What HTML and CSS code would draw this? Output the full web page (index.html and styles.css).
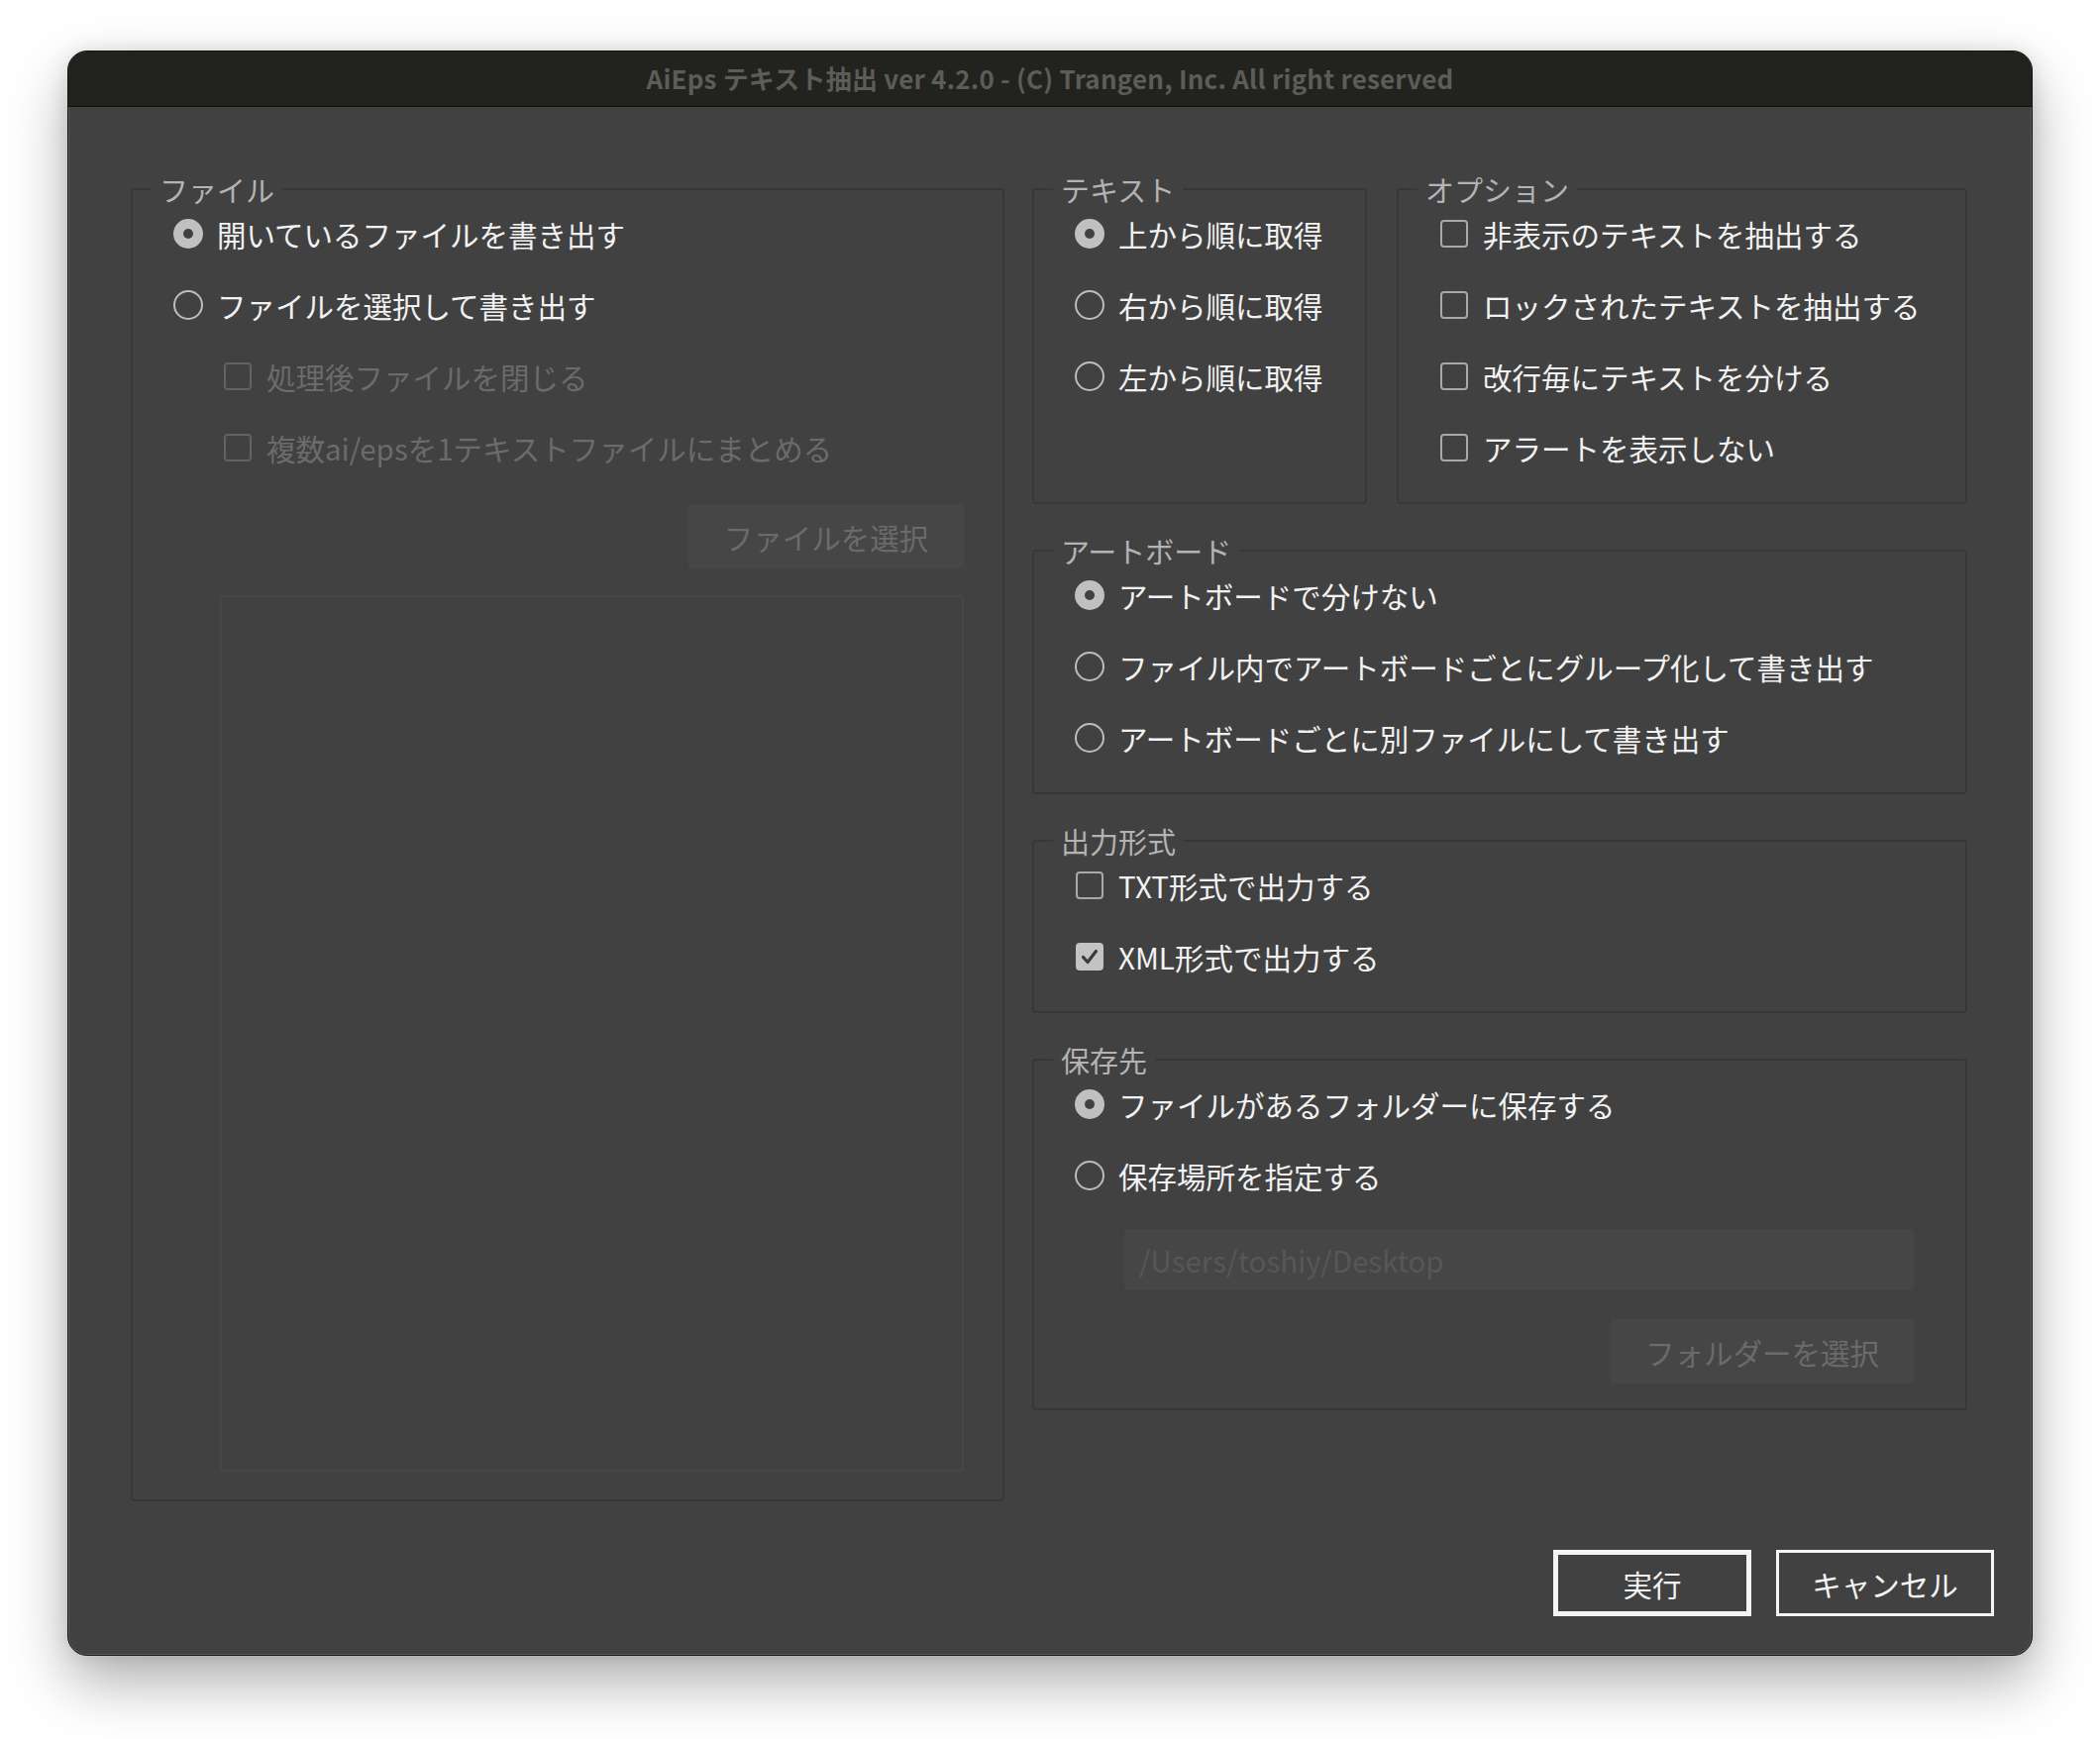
FILE: index.html
```html
<!DOCTYPE html>
<html lang="ja">
<head>
<meta charset="utf-8">
<title>AiEps テキスト抽出</title>
<link rel="stylesheet" href="styles.css">
</head>
<body>
<div class="window">
  <div class="titlebar">AiEps テキスト抽出 ver 4.2.0 - (C) Trangen, Inc. All right reserved</div>
  <div class="body">
    <div class="columns">
      <fieldset class="group file-group">
        <legend>ファイル</legend>
        <div class="rows">
          <div class="row"><span class="radio on"></span><span class="label">開いているファイルを書き出す</span></div>
          <div class="row"><span class="radio"></span><span class="label">ファイルを選択して書き出す</span></div>
          <div class="row sub disabled"><span class="check"></span><span class="label">処理後ファイルを閉じる</span></div>
          <div class="row sub disabled"><span class="check"></span><span class="label">複数ai/epsを1テキストファイルにまとめる</span></div>
        </div>
        <div class="btn-line"><div class="flat-btn file-btn">ファイルを選択</div></div>
        <div class="file-list"></div>
      </fieldset>
      <div class="right">
        <div class="top-row">
          <fieldset class="group text-group">
            <legend>テキスト</legend>
            <div class="rows">
              <div class="row"><span class="radio on"></span><span class="label">上から順に取得</span></div>
              <div class="row"><span class="radio"></span><span class="label">右から順に取得</span></div>
              <div class="row"><span class="radio"></span><span class="label">左から順に取得</span></div>
            </div>
          </fieldset>
          <fieldset class="group opt-group">
            <legend>オプション</legend>
            <div class="rows">
              <div class="row"><span class="check"></span><span class="label">非表示のテキストを抽出する</span></div>
              <div class="row"><span class="check"></span><span class="label">ロックされたテキストを抽出する</span></div>
              <div class="row"><span class="check"></span><span class="label">改行毎にテキストを分ける</span></div>
              <div class="row"><span class="check"></span><span class="label">アラートを表示しない</span></div>
            </div>
          </fieldset>
        </div>
        <fieldset class="group">
          <legend>アートボード</legend>
          <div class="rows">
            <div class="row"><span class="radio on"></span><span class="label">アートボードで分けない</span></div>
            <div class="row"><span class="radio"></span><span class="label">ファイル内でアートボードごとにグループ化して書き出す</span></div>
            <div class="row"><span class="radio"></span><span class="label">アートボードごとに別ファイルにして書き出す</span></div>
          </div>
        </fieldset>
        <fieldset class="group out-group">
          <legend>出力形式</legend>
          <div class="rows">
            <div class="row"><span class="check"></span><span class="label">TXT形式で出力する</span></div>
            <div class="row"><span class="check on"><svg viewBox="0 0 28 28" width="28" height="28"><path d="M7.5 14.5 L12 19.5 L20.5 8.5" fill="none" stroke="#3b3b3b" stroke-width="3.2" stroke-linecap="round" stroke-linejoin="round"/></svg></span><span class="label">XML形式で出力する</span></div>
          </div>
        </fieldset>
        <fieldset class="group save-group">
          <legend>保存先</legend>
          <div class="rows">
            <div class="row"><span class="radio on"></span><span class="label">ファイルがあるフォルダーに保存する</span></div>
            <div class="row"><span class="radio"></span><span class="label">保存場所を指定する</span></div>
          </div>
          <div class="path-input">/Users/toshiy/Desktop</div>
          <div class="btn-line"><div class="flat-btn folder-btn">フォルダーを選択</div></div>
        </fieldset>
      </div>
    </div>
    <div class="actions">
      <div class="btn default">実行</div>
      <div class="btn">キャンセル</div>
    </div>
  </div>
</div>
</body>
</html>
```

FILE: styles.css
```css
html, body {
  margin: 0;
  padding: 0;
  background: #ffffff;
}
body {
  width: 2120px;
  height: 1756px;
  overflow: hidden;
  font-family: "Noto Sans CJK JP", "Noto Sans", sans-serif;
}
.window {
  box-sizing: border-box;
  margin: 51px 0 0 68px;
  width: 1984px;
  height: 1621px;
  background: #414141;
  border: 1px solid #161616;
  border-radius: 20px;
  overflow: hidden;
  box-shadow: 0 26px 60px rgba(0,0,0,0.32), 0 0 18px rgba(0,0,0,0.10), inset 0 0 0 1px #595959;
  display: flex;
  flex-direction: column;
}
.titlebar {
  height: 55px;
  flex: none;
  background: #22221f;
  border-bottom: 1px solid #0f0f0e;
  color: #5c5c58;
  font-weight: 700;
  font-size: 26px;
  line-height: 53px;
  text-align: center;
  letter-spacing: 0.2px;
}
.body {
  flex: 1;
  padding: 66px 38px 0 63px;
  display: flex;
  flex-direction: column;
}
.columns {
  display: flex;
  gap: 28px;
  margin-right: 27px;
}
.group {
  margin: 0;
  border: 2px solid #373737;
  border-radius: 4px;
  padding: 0 20px 27px 41px;
  min-width: 0;
}
.group legend {
  font-size: 29px;
  line-height: 34px;
  color: #b3b3b3;
  padding: 0 8px;
  margin-left: -22px;
}
.file-group {
  width: 882px;
  height: 1342px;
  box-sizing: border-box;
  display: flex;
  flex-direction: column;
}
.right {
  width: 944px;
  display: flex;
  flex-direction: column;
  gap: 30px;
}
.top-row {
  display: flex;
  gap: 30px;
}
.text-group {
  width: 338px;
  box-sizing: border-box;
}
.opt-group {
  flex: 1;
}
.rows {
  display: flex;
  flex-direction: column;
  gap: 16px;
}
.row {
  height: 56px;
  display: flex;
  align-items: center;
  gap: 14px;
  font-size: 29.5px;
  color: #f2f2f2;
  white-space: nowrap;
}
.row.sub {
  padding-left: 50px;
}
.row.disabled {
  color: #6b6b6b;
}
.radio {
  box-sizing: border-box;
  width: 30px;
  height: 30px;
  border-radius: 50%;
  border: 2px solid #bdbdbd;
  flex: none;
  display: flex;
  align-items: center;
  justify-content: center;
}
.radio.on {
  background: #c0c0c0;
  border-color: #c0c0c0;
}
.radio.on::after {
  content: "";
  width: 10px;
  height: 10px;
  border-radius: 50%;
  background: #414141;
}
.check {
  box-sizing: border-box;
  width: 28px;
  height: 28px;
  border-radius: 4px;
  border: 2px solid #a9a9a9;
  flex: none;
  display: flex;
  align-items: center;
  justify-content: center;
  margin-left: 1px;
  margin-right: 1px;
}
.check svg {
  display: block;
  flex: none;
}
.check.on {
  background: #c3c3c3;
  border-color: #c3c3c3;
}
.row.disabled .check {
  border-color: #636363;
}
.btn-line {
  display: flex;
  justify-content: flex-end;
  margin-top: 29px;
}
.flat-btn {
  height: 65px;
  background: #464646;
  color: #6b6b6b;
  font-size: 29.5px;
  display: flex;
  align-items: center;
  justify-content: center;
  border-radius: 2px;
}
.file-btn {
  width: 278px;
  margin-right: 19px;
}
.file-list {
  margin: 27px 19px 0 47px;
  height: 885px;
  border: 2px solid #474747;
  border-radius: 3px;
  box-sizing: border-box;
}
.save-group {
  padding-bottom: 25px;
}
.save-group .btn-line {
  margin-top: 29px;
  margin-right: 32px;
}
.folder-btn {
  width: 306px;
}
.path-input {
  margin: 26px 32px 0 50px;
  height: 62px;
  background: #464646;
  color: #575757;
  font-size: 29.5px;
  line-height: 62px;
  padding-left: 15px;
  border-radius: 3px;
}
.actions {
  display: flex;
  justify-content: flex-end;
  gap: 25px;
  margin-top: 49px;
}
.btn {
  box-sizing: border-box;
  height: 67px;
  width: 220px;
  border: 3px solid #f4f4f4;
  color: #f4f4f4;
  font-size: 29.5px;
  display: flex;
  align-items: center;
  justify-content: center;
}
.btn.default {
  width: 200px;
  border-width: 5px;
}
```
